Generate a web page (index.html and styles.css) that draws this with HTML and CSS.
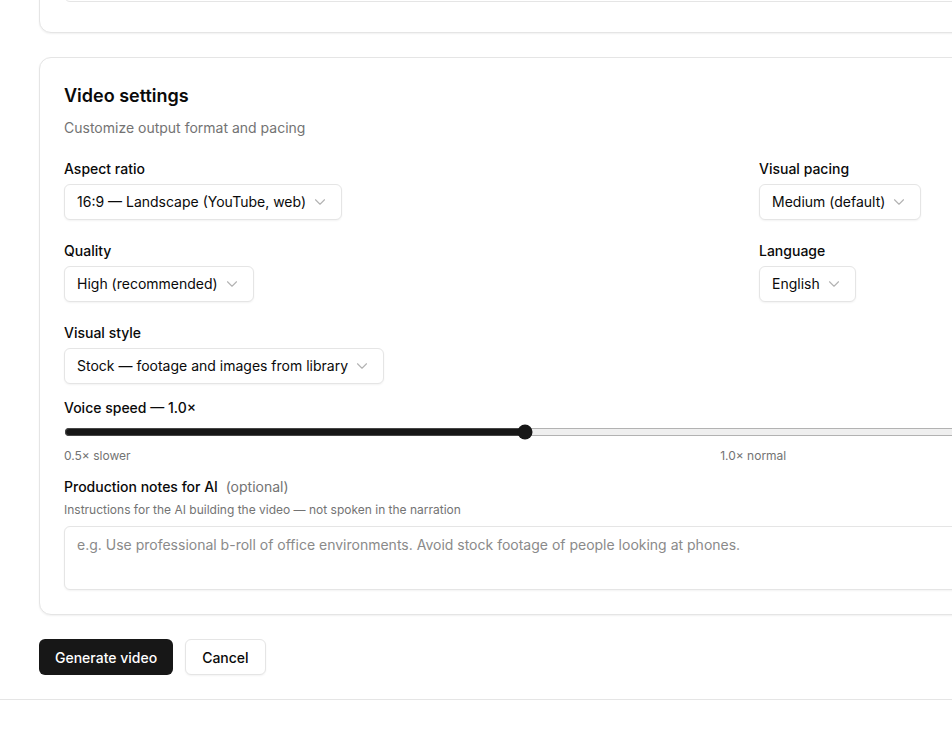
FILE: index.html
```html
<!DOCTYPE html>
<html lang="en">
<head>
    <meta charset="UTF-8">
    <meta name="viewport" content="width=device-width, initial-scale=1.0">
    <title>New video</title>
    <link rel="stylesheet" href="styles.css">
</head>
<body>

    <main class="page">

        <!-- previous section, scrolled mostly out of view -->
        <section class="card card-prev">
            <div class="prev-box"></div>
        </section>

        <section class="card">
            <h2 class="card-title">Video settings</h2>
            <p class="card-desc">Customize output format and pacing</p>

            <div class="settings-grid">
                <div class="field">
                    <label>Aspect ratio</label>
                    <button type="button" class="select">
                        <span>16:9 — Landscape (YouTube, web)</span>
                        <svg class="chev" viewBox="0 0 24 24"><path d="m6 9 6 6 6-6"/></svg>
                    </button>
                </div>
                <div class="field">
                    <label>Visual pacing</label>
                    <button type="button" class="select">
                        <span>Medium (default)</span>
                        <svg class="chev" viewBox="0 0 24 24"><path d="m6 9 6 6 6-6"/></svg>
                    </button>
                </div>
                <div class="field">
                    <label>Quality</label>
                    <button type="button" class="select">
                        <span>High (recommended)</span>
                        <svg class="chev" viewBox="0 0 24 24"><path d="m6 9 6 6 6-6"/></svg>
                    </button>
                </div>
                <div class="field">
                    <label>Language</label>
                    <button type="button" class="select">
                        <span>English</span>
                        <svg class="chev" viewBox="0 0 24 24"><path d="m6 9 6 6 6-6"/></svg>
                    </button>
                </div>
                <div class="field">
                    <label>Visual style</label>
                    <button type="button" class="select">
                        <span>Stock — footage and images from library</span>
                        <svg class="chev" viewBox="0 0 24 24"><path d="m6 9 6 6 6-6"/></svg>
                    </button>
                </div>
            </div>

            <div class="speed">
                <label for="voiceSpeed">Voice speed — 1.0×</label>
                <input type="range" id="voiceSpeed" min="0.5" max="2" step="0.1" value="1">
                <div class="speed-marks">
                    <span>0.5× slower</span>
                    <span>1.0× normal</span>
                    <span>2.0× faster</span>
                </div>
            </div>

            <div class="notes">
                <label for="notes">Production notes for AI <span class="optional">(optional)</span></label>
                <p class="hint">Instructions for the AI building the video — not spoken in the narration</p>
                <textarea id="notes" placeholder="e.g. Use professional b-roll of office environments. Avoid stock footage of people looking at phones."></textarea>
            </div>
        </section>

        <div class="actions">
            <button type="button" class="btn btn-primary">Generate video</button>
            <button type="button" class="btn btn-outline">Cancel</button>
        </div>
    </main>

    <footer class="footer"></footer>

</body>
</html>
```

FILE: styles.css
```css
body {
    font-family: 'Inter', 'Noto Sans', sans-serif;
    color: #0a0a0a;
    margin: 0;
    background-color: #fff;
}

.page {
    width: 1424px;
    margin-top: -123px;
    padding: 0 39px 24px;
}

.card {
    background-color: #fff;
    border: 1px solid #e5e5e5;
    border-radius: 12px;
    box-shadow: 0 1px 2px rgba(0, 0, 0, 0.06);
    padding: 24px;
    margin-bottom: 24px;
}

.card-prev {
    padding-bottom: 30px;
}

.prev-box {
    height: 100px;
    border: 1px solid #e5e5e5;
    border-radius: 6px;
    box-sizing: border-box;
}

.card-title {
    font-size: 18px;
    line-height: 28px;
    font-weight: 600;
    margin: 0;
}

.card-desc {
    font-size: 14px;
    line-height: 20px;
    color: #737373;
    margin: 8px 0 21px;
}

.settings-grid {
    display: grid;
    grid-template-columns: 1fr 1fr;
    column-gap: 16px;
    row-gap: 21px;
}

.field {
    display: flex;
    flex-direction: column;
    align-items: flex-start;
    gap: 5px;
}

label {
    font-size: 14px;
    line-height: 20px;
    font-weight: 500;
}

.select {
    display: inline-flex;
    align-items: center;
    gap: 5px;
    height: 36px;
    padding: 0 12px 1px;
    font-family: inherit;
    font-size: 14px;
    color: #0a0a0a;
    background-color: #fff;
    border: 1px solid #e5e5e5;
    border-radius: 6px;
    box-shadow: 0 1px 2px rgba(0, 0, 0, 0.05);
    cursor: pointer;
}

.chev {
    width: 18px;
    height: 18px;
    fill: none;
    stroke: #b3b3b3;
    stroke-width: 1.5;
    stroke-linecap: round;
    stroke-linejoin: round;
}

.speed {
    margin-top: 14px;
    display: flex;
    flex-direction: column;
}

.speed input[type="range"] {
    width: 100%;
    margin: 6px 0 0;
    accent-color: #171717;
}

.speed-marks {
    display: flex;
    justify-content: space-between;
    font-size: 12px;
    line-height: 16px;
    color: #737373;
    margin-top: 8px;
}

.notes {
    margin-top: 13px;
    display: flex;
    flex-direction: column;
}

.optional {
    font-weight: 400;
    color: #737373;
    margin-left: 4px;
}

.hint {
    font-size: 12px;
    line-height: 16px;
    color: #737373;
    margin: 5px 0 8px;
}

textarea {
    height: 64px;
    box-sizing: border-box;
    padding: 8px 12px;
    font-family: inherit;
    font-size: 14px;
    line-height: 20px;
    border: 1px solid #e5e5e5;
    border-radius: 6px;
    box-shadow: 0 1px 2px rgba(0, 0, 0, 0.05);
    resize: none;
}

textarea::placeholder {
    color: #8a8a8a;
}

.actions {
    display: flex;
    gap: 12px;
}

.btn {
    height: 36px;
    padding: 0 16px;
    font-family: inherit;
    font-size: 14px;
    font-weight: 500;
    border-radius: 6px;
    cursor: pointer;
}

.btn-primary {
    background-color: #171717;
    color: #fff;
    border: none;
}

.btn-outline {
    background-color: #fff;
    color: #0a0a0a;
    border: 1px solid #e5e5e5;
    box-shadow: 0 1px 2px rgba(0, 0, 0, 0.05);
}

.footer {
    border-top: 1px solid #e5e5e5;
    height: 60px;
    width: 1502px;
}
```
